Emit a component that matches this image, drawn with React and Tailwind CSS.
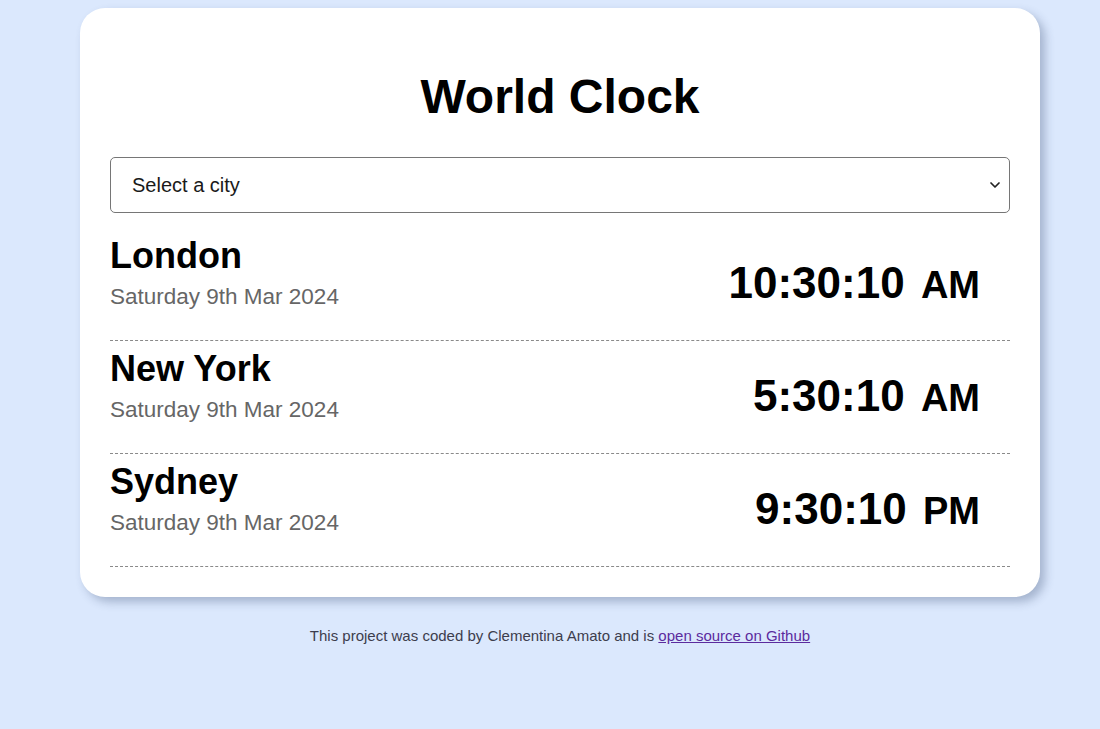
import { ChevronDown } from 'lucide-react'

const CITIES = [
  { name: 'London', date: 'Saturday 9th Mar 2024', time: '10:30:10', period: 'AM' },
  { name: 'New York', date: 'Saturday 9th Mar 2024', time: '5:30:10', period: 'AM' },
  { name: 'Sydney', date: 'Saturday 9th Mar 2024', time: '9:30:10', period: 'PM' },
]

function CityRow({ city }) {
  return (
    <div className="flex h-[113px] items-center justify-between border-b border-dashed border-[#8a8a8a]">
      <div className="self-start pt-[7px]">
        <div className="text-[36px] font-bold leading-[41px] text-black">{city.name}</div>
        <div className="mt-[8px] text-[22.5px] leading-[25px] text-[#666]">{city.date}</div>
      </div>
      <div className="pr-[30px] text-[44px] font-bold leading-[50px] text-black">
        {city.time} <span className="ml-[4px] text-[38px]">{city.period}</span>
      </div>
    </div>
  )
}

export default function App() {
  return (
    <div
      className="min-h-[729px] bg-[#dbe8fd] pt-[8px]"
      style={{ fontFamily: '"Liberation Sans", Arial, sans-serif' }}
    >
      <div className="ml-[80px] w-[960px]">
        <div className="rounded-[25px] bg-white px-[30px] pb-[30px] pt-[61px] shadow-[5px_5px_10px_rgba(40,60,100,0.3)]">
          <h1 className="mb-[33px] text-center text-[48px] font-bold leading-[55px] text-black">
            World Clock
          </h1>
          <div className="relative mb-[15px]">
            <select className="h-[56px] w-full appearance-none rounded-[5px] border border-[#767676] bg-white pl-[21px] text-[20px] text-[#1a1a1a] outline-none">
              <option>Select a city</option>
              <option>Paris</option>
              <option>Tokyo</option>
            </select>
            <ChevronDown
              size={16}
              strokeWidth={2.6}
              className="pointer-events-none absolute right-[7px] top-[20px] text-[#222]"
            />
          </div>
          {CITIES.map((city) => (
            <CityRow key={city.name} city={city} />
          ))}
        </div>
        <p className="mt-[28px] text-center text-[15px] text-[#3d3d4d]">
          This project was coded by Clementina Amato and is{' '}
          <a href="#" className="text-[#5b2b9e] underline">
            open source on Github
          </a>
        </p>
      </div>
    </div>
  )
}
